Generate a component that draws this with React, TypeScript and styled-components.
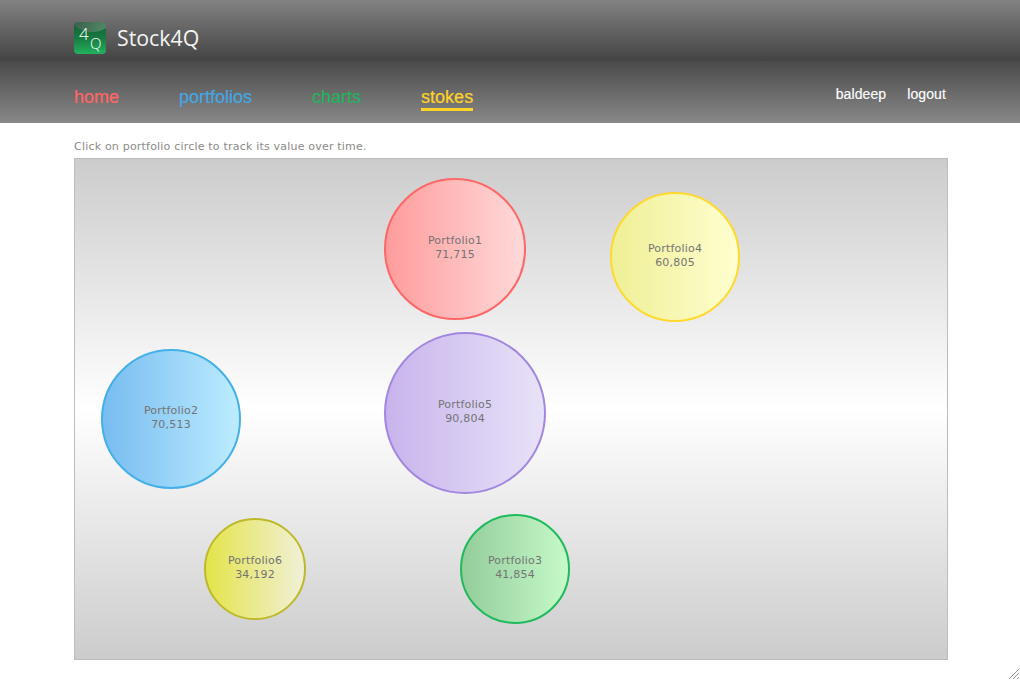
import React from "react";
import styled, { createGlobalStyle } from "styled-components";

const Global = createGlobalStyle`
  html, body { margin: 0; padding: 0; background: #fff; }
  body { width: 1020px; height: 680px; overflow: hidden; position: relative; font-family: "DejaVu Sans", Verdana, sans-serif; }
`;

const Header = styled.header`
  height: 123px;
  box-sizing: border-box;
  padding: 22px 74px 0;
  display: flex;
  flex-direction: column;
  background: linear-gradient(180deg, #828282 0%, #444444 49%, #4b4b4b 50%, #888888 100%);
`;

const Brand = styled.div`
  display: flex;
  align-items: center;
  gap: 11px;
  height: 32px;
`;

const LogoMark = styled.div`
  width: 32px;
  height: 32px;
  border-radius: 4px;
  position: relative;
  overflow: hidden;
  background: linear-gradient(180deg, #155f36 0%, #187a40 50%, #22b25e 100%);
  color: #fff;
  font-family: "Open Sans", sans-serif;

  &::before {
    content: "";
    position: absolute;
    left: -4px;
    top: -24px;
    width: 44px;
    height: 34px;
    border-radius: 50%;
    background: linear-gradient(90deg, rgba(90, 90, 90, 0.5), rgba(170, 190, 170, 0.45));
  }
`;

const LogoFour = styled.span`
  position: absolute;
  left: 5px;
  top: 2px;
  font-size: 17px;
  font-weight: 300;
  line-height: 20px;
`;

const LogoQ = styled.span`
  position: absolute;
  left: 16px;
  top: 11px;
  font-size: 15px;
  font-weight: 300;
  line-height: 20px;
`;

const BrandName = styled.div`
  color: #f4f4f4;
  font-family: "Open Sans", sans-serif;
  font-size: 21.3px;
  line-height: 32px;
`;

const NavRow = styled.nav`
  display: flex;
  justify-content: space-between;
  align-items: flex-start;
  margin-top: 30px;
  width: 872px;
`;

const MainLinks = styled.div`
  display: flex;
  gap: 60px;
`;

const NavLink = styled.a<{ $color: string; $active?: boolean }>`
  color: ${(p) => p.$color};
  font-family: "Liberation Sans", Arial, sans-serif;
  font-size: 18px;
  line-height: 21px;
  padding-top: 3px;
  height: 21px;
  display: block;
  border-bottom: 3px solid ${(p) => (p.$active ? p.$color : "transparent")};
  -webkit-text-stroke: 0.2px ${(p) => p.$color};
`;

const UserLinks = styled.div`
  display: flex;
  gap: 21px;
`;

const UserLink = styled.a`
  color: #fff;
  font-family: "Liberation Sans", Arial, sans-serif;
  font-size: 14px;
  line-height: 20px;
  letter-spacing: 0.1px;
  -webkit-text-stroke: 0.15px #fff;
`;

const Main = styled.main`
  padding: 16px 72px 0 74px;
`;

const Hint = styled.p`
  margin: 0;
  color: #8c8a88;
  font-size: 11px;
  line-height: 16px;
  height: 19px;
  letter-spacing: 0.2px;
`;

const Chart = styled.section`
  position: relative;
  width: 874px;
  height: 502px;
  box-sizing: border-box;
  border: 1px solid #bdbdbd;
  background: linear-gradient(180deg, #cccccc 0%, #ffffff 50%, #cccccc 100%);
`;

const Bubble = styled.div<{ $x: number; $y: number; $size: number; $border: string; $from: string; $to: string }>`
  position: absolute;
  left: ${(p) => p.$x - 75}px;
  top: ${(p) => p.$y - 159}px;
  width: ${(p) => p.$size}px;
  height: ${(p) => p.$size}px;
  box-sizing: border-box;
  border-radius: 50%;
  border: 2px solid ${(p) => p.$border};
  background: linear-gradient(90deg, ${(p) => p.$from}, ${(p) => p.$to});
  display: flex;
  flex-direction: column;
  align-items: center;
  justify-content: center;
  padding-bottom: 2px;
  color: #747474;
  font-size: 11px;
  line-height: 14px;
  letter-spacing: 0.2px;
  text-align: center;
`;

const Grip = styled.svg`
  position: absolute;
  right: 0;
  bottom: 0;
  width: 12px;
  height: 12px;
`;

const bubbles = [
  { name: "Portfolio1", value: "71,715", x: 384, y: 178, size: 142, border: "#ff6666", from: "#ff9c9c", to: "#ffd9d9" },
  { name: "Portfolio4", value: "60,805", x: 610, y: 192, size: 130, border: "#ffd92e", from: "#efef96", to: "#ffffd0" },
  { name: "Portfolio5", value: "90,804", x: 384, y: 332, size: 162, border: "#a287e0", from: "#c8b4ec", to: "#e8e2f8" },
  { name: "Portfolio2", value: "70,513", x: 101, y: 349, size: 140, border: "#44b0ea", from: "#78bcf0", to: "#bcecff" },
  { name: "Portfolio6", value: "34,192", x: 204, y: 518, size: 102, border: "#bdb92a", from: "#e4e44a", to: "#f0f0d8" },
  { name: "Portfolio3", value: "41,854", x: 460, y: 514, size: 110, border: "#1fba5c", from: "#94cc9c", to: "#c6fac8" },
];

export default function App() {
  return (
    <>
      <Global />
      <Header>
        <Brand>
          <LogoMark>
            <LogoFour>4</LogoFour>
            <LogoQ>Q</LogoQ>
          </LogoMark>
          <BrandName>Stock4Q</BrandName>
        </Brand>
        <NavRow>
          <MainLinks>
            <NavLink $color="#ff6666">home</NavLink>
            <NavLink $color="#44a8e4">portfolios</NavLink>
            <NavLink $color="#22b35e">charts</NavLink>
            <NavLink $color="#ffd426" $active>stokes</NavLink>
          </MainLinks>
          <UserLinks>
            <UserLink>baldeep</UserLink>
            <UserLink>logout</UserLink>
          </UserLinks>
        </NavRow>
      </Header>
      <Main>
        <Hint>Click on portfolio circle to track its value over time.</Hint>
        <Chart>
          {bubbles.map((b) => (
            <Bubble key={b.name} $x={b.x} $y={b.y} $size={b.size} $border={b.border} $from={b.from} $to={b.to}>
              <span>{b.name}</span>
              <span>{b.value}</span>
            </Bubble>
          ))}
        </Chart>
      </Main>
      <Grip viewBox="0 0 12 12">
        <path d="M1 11 L11 1 M5 11 L11 5 M9 11 L11 9" stroke="#999" strokeWidth="1" fill="none" />
      </Grip>
    </>
  );
}
